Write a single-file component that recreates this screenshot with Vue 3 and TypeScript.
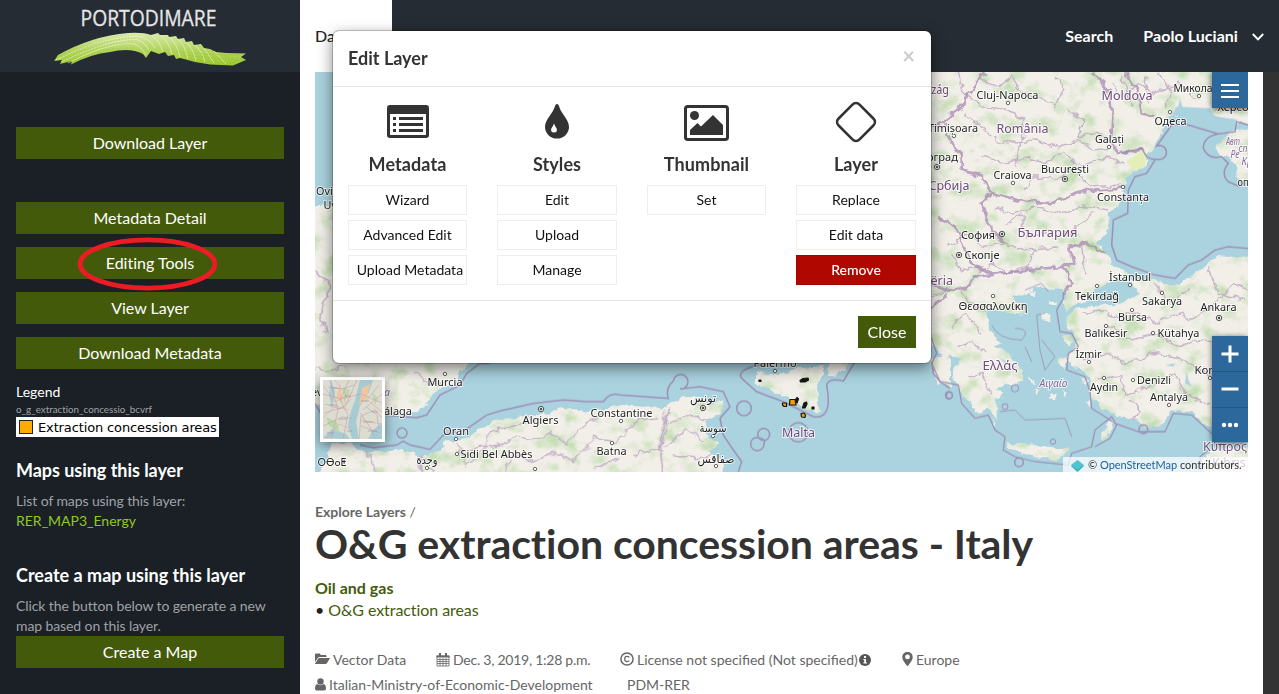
<script setup lang="ts">
interface MapLabel {
  t: string
  x: number
  y: number
  kind?: 'country' | 'sea' | 'small' | 'tifinagh'
  w: number
}

const labels: MapLabel[] = [
  { t: 'Cluj-Napoca', x: 1007.5, y: 99, w: 62 },
  { t: 'Moldova', x: 1127, y: 100, kind: 'country', w: 51 },
  { t: 'Микола', x: 1193, y: 92, w: 39 },
  { t: 'Херсо', x: 1233, y: 111, w: 31 },
  { t: 'Одеса', x: 1170.5, y: 125, w: 32 },
  { t: 'România', x: 1022.5, y: 133, kind: 'country', w: 52 },
  { t: 'Timișoara', x: 953, y: 132, w: 50 },
  { t: 'Galați', x: 1109.5, y: 143, w: 29 },
  { t: 'București', x: 1065, y: 173, w: 48 },
  { t: 'Craiova', x: 1012.5, y: 179, w: 38 },
  { t: 'Београд', x: 936, y: 161, w: 44 },
  { t: 'Србија', x: 949, y: 190, kind: 'country', w: 41 },
  { t: 'ország', x: 932, y: 94, kind: 'country', w: 34 },
  { t: 'Constanța', x: 1123, y: 201, w: 52 },
  { t: 'Авт', x: 1233, y: 145, kind: 'sea', w: 14 },
  { t: 'сп', x: 1243, y: 152, kind: 'sea', w: 9 },
  { t: 'Ре', x: 1235, y: 158, kind: 'sea', w: 9 },
  { t: 'Кр', x: 1247, y: 165, kind: 'sea', w: 11 },
  { t: 'оп', x: 1243, y: 186, w: 11 },
  { t: 'София', x: 978, y: 239, w: 34 },
  { t: 'България', x: 1047.5, y: 237, kind: 'country', w: 60 },
  { t: 'Скопје', x: 982, y: 259, w: 35 },
  { t: 'İstanbul', x: 1130, y: 281, w: 42 },
  { t: 'Tekirdağ', x: 1097, y: 300, w: 44 },
  { t: 'Sakarya', x: 1162, y: 305, w: 40 },
  { t: 'Ankara', x: 1218.5, y: 311, w: 36 },
  { t: 'Bursa', x: 1132.5, y: 321, w: 29 },
  { t: 'Balıkesir', x: 1106, y: 337, w: 43 },
  { t: 'Kütahya', x: 1178.5, y: 337, w: 42 },
  { t: 'İzmir', x: 1088.5, y: 358, w: 26 },
  { t: 'Θεσσαλονίκη', x: 993, y: 310, w: 69 },
  { t: 'Shqipëria', x: 925, y: 285, kind: 'country', w: 56 },
  { t: 'Ελλάς', x: 1000, y: 370, kind: 'country', w: 35 },
  { t: 'Αιγαίο', x: 1053.5, y: 387, kind: 'sea', w: 28 },
  { t: 'Aydın', x: 1104, y: 391, w: 28 },
  { t: 'Denizli', x: 1154, y: 384, w: 34 },
  { t: 'Antalya', x: 1169, y: 401, w: 38 },
  { t: 'Konya', x: 1211, y: 374, w: 33 },
  { t: 'Κύπρος', x: 1225, y: 451, kind: 'country', w: 44 },
  { t: 'Kıbrıs', x: 1229, y: 467, kind: 'country', w: 34 },
  { t: 'Oviedo', x: 334, y: 195, w: 36 },
  { t: 'Uvieu', x: 338, y: 209, w: 29 },
  { t: 'Murcia', x: 445, y: 386, w: 35 },
  { t: 'Sevilla', x: 321, y: 396, w: 32 },
  { t: 'a', x: 387, y: 396, kind: 'sea', w: 6 },
  { t: 'Málaga', x: 393, y: 415, w: 38 },
  { t: 'Oran', x: 456, y: 435, w: 26 },
  { t: 'Algiers', x: 540.5, y: 424, w: 36 },
  { t: 'Sidi Bel Abbès', x: 496.5, y: 458, w: 72 },
  { t: 'وجدة', x: 427, y: 464, w: 21 },
  { t: 'ⵔⴱⴰⵟ', x: 332, y: 466, kind: 'tifinagh', w: 29 },
  { t: 'Constantine', x: 621.5, y: 417, w: 62 },
  { t: 'Batna', x: 611.5, y: 455, w: 30 },
  { t: 'Palermo', x: 775, y: 367, w: 43 },
  { t: 'تونس', x: 703, y: 402, w: 26 },
  { t: 'سوسة', x: 713, y: 432, w: 27 },
  { t: 'صفاقس', x: 716, y: 463, w: 37 },
  { t: 'Malta', x: 798.5, y: 437, kind: 'country', w: 33 },
]

const towns: [number, number][] = [
  [1008, 103], [1199, 96], [1170, 112], [954, 136], [1109, 147], [1013, 183], [1123, 187],
  [993, 296], [1097, 286], [1130, 285], [1162, 293], [1132, 310], [1106, 326], [1153, 333],
  [1089, 362], [1104, 378], [1133, 380], [1169, 405], [1210, 378], [445, 374], [456, 439],
  [457, 454], [427, 468], [621, 421], [612, 443], [535, 469], [775, 371], [713, 436], [716, 466],
]
const capitals: [number, number][] = [
  [937, 167], [1065, 179], [1002, 234], [959, 255], [1219, 318], [541, 409], [703, 408],
]
const sideButtons = ['Metadata Detail', 'Editing Tools', 'View Layer', 'Download Metadata']

interface Column { icon: string; title: string; actions: string[] }
const columns: Column[] = [
  { icon: 'list', title: 'Metadata', actions: ['Wizard', 'Advanced Edit', 'Upload Metadata'] },
  { icon: 'drop', title: 'Styles', actions: ['Edit', 'Upload', 'Manage'] },
  { icon: 'image', title: 'Thumbnail', actions: ['Set'] },
  { icon: 'diamond', title: 'Layer', actions: ['Replace', 'Edit data', 'Remove'] },
]
</script>

<template>
  <div class="page">
    <aside class="sidebar">
      <div class="brand">
        <svg width="300" height="72" viewBox="0 0 300 72">
          <defs>
            <linearGradient id="leaf" x1="0" y1="1" x2="0" y2="0">
              <stop offset="0" stop-color="#9cc92e" />
              <stop offset=".5" stop-color="#b4d560" />
              <stop offset="1" stop-color="#dcebaf" />
            </linearGradient>
          </defs>
          <text x="80.5" y="26" textLength="136" lengthAdjust="spacingAndGlyphs" class="brand-name">PORTODIMARE</text>
          <path d="M54 61L58 55Q92 36 128 33Q143 32 151 35L158 33L160 35L168 35L169 37L176 36L178 39L184 38L186 42L192 41L194 45L201 44L204 48L210 49L216 52L226 53L246 53.500L241 57L246 60L233 65.500L210 64.500L195 62L180 58L176 59L174 55L168 56L165 52L159 54L151 51L146 58L143 54Q130 47 110 52Q91 54 71 64.500L72 61L60 64L62 60Z" fill="url(#leaf)" />
          <g fill="none" stroke="#eef5d2" stroke-width=".8" opacity=".8">
            <path d="M56 60Q98 38 137 36Q149 37 155 48M61 62Q100 43 132 39Q143 39 149 50M68 63Q103 45 128 43Q140 43 146 55" />
            <path d="M151 35Q160 41 163 52M160 35Q169 42 172 54M169 37Q177 43 180 57M178 39Q185 45 188 59M186 42Q193 48 196 61M194 45Q202 50 205 62M204 48L214 63M214 51L226 64" />
          </g>
          <g fill="none" stroke="#80aa23" stroke-width="1.200" stroke-dasharray="1 2" opacity=".35">
            <path d="M65 60Q101 42 133 43M72 62Q105 47 134 48M62 57Q97 39 137 38M177 51Q204 55 241 55M184 55Q210 58 241 60M185 58Q211 63 235 63" />
          </g>
        </svg>
      </div>
      <div class="side-body">
        <button class="btn side-btn">Download Layer</button>
        <div class="tools">
          <button v-for="b in sideButtons" :key="b" class="btn side-btn">
            {{ b }}
            <svg v-if="b === 'Editing Tools'" class="ring" width="140" height="54" viewBox="0 0 140 54">
              <ellipse cx="70.500" cy="27" rx="67.300" ry="24.200" fill="none" stroke="#ed1c24" stroke-width="4.800" />
            </svg>
          </button>
        </div>
        <div class="legend-title">Legend</div>
        <div class="legend-name">o_g_extraction_concessio_bcvrf</div>
        <div class="legend-box"><i></i><span>Extraction concession areas</span></div>
        <h4>Maps using this layer</h4>
        <p>List of maps using this layer:<br /><a>RER_MAP3_Energy</a></p>
        <h4 class="second">Create a map using this layer</h4>
        <p>Click the button below to generate a new map based on this layer.</p>
        <button class="btn side-btn">Create a Map</button>
      </div>
    </aside>

    <main class="main">
      <header class="topbar">
        <div class="tab">Data</div>
        <nav class="nav">
          <span>Search</span>
          <span>Paolo Luciani</span>
          <svg width="12" height="8" viewBox="0 0 12 8"><path d="M.8 1L6 6.300L11.200 1" fill="none" stroke="#fff" stroke-width="1.900" /></svg>
        </nav>
      </header>
      <div class="below">
        <div class="content">
          <div class="map">
            <svg class="tiles" width="933" height="400" viewBox="315 72 933 400">
              <defs>
                <filter id="terrain" filterUnits="userSpaceOnUse" x="300" y="60" width="960" height="420" color-interpolation-filters="sRGB">
                  <feTurbulence type="fractalNoise" baseFrequency=".11" numOctaves="3" seed="8" result="rough" />
                  <feDisplacementMap in="SourceGraphic" in2="rough" scale="8" xChannelSelector="R" yChannelSelector="G" result="land" />
                  <feTurbulence type="fractalNoise" baseFrequency=".05 .06" numOctaves="6" seed="21" />
                  <feColorMatrix values="0 0 0 0 .77  0 0 0 0 .87  0 0 0 0 .71  0 3 0 0 -1.450" result="woods" />
                  <feComposite in="woods" in2="land" operator="in" result="green" />
                  <feMerge><feMergeNode in="land" /><feMergeNode in="green" /></feMerge>
                </filter>
                <filter id="wobble" filterUnits="userSpaceOnUse" x="300" y="60" width="960" height="420">
                  <feTurbulence type="fractalNoise" baseFrequency=".13" numOctaves="2" seed="3" result="n" />
                  <feDisplacementMap in="SourceGraphic" in2="n" scale="8" xChannelSelector="R" yChannelSelector="G" />
                </filter>
                <clipPath id="shore"><use href="#coast-east" /><use href="#coast-west" /></clipPath>
              </defs>
              <rect x="315" y="72" width="933" height="400" fill="#aad3df" />
              <g filter="url(#terrain)" fill="#f2efe9">
                <path id="coast-east" transform="translate(925 0) scale(.33333)" d="M-20 190H999V368L935 370L870 350L800 345L740 345L710 400L690 440L665 470L662 495L620 518L602 545L592 600L555 640L545 705L515 728L550 765L560 795L615 822L540 855L515 868L490 897L440 920L425 935L413 870L330 860L300 885L260 890L300 925L290 945L240 935L180 925L190 990L230 1030L205 1040L250 1060L285 1100L295 1145L255 1150L215 1165L240 1185L215 1200L215 1255L190 1225L175 1240L150 1240L140 1205L110 1185L80 1120L110 1080L50 1065L20 1030L-20 970Z
                  M615 840L680 835L740 858L780 845L830 800L880 765L940 772L999 765V1290L860 1285L800 1240L740 1230L720 1275L650 1280L630 1260L575 1250L530 1225L490 1185L500 1145L470 1110L430 1085L440 1050L460 1015L425 985L425 945L470 920L560 915L645 885Z
                  M999 385L920 395L870 440L885 467L920 470L940 535L999 565ZM245 1330L330 1335L435 1350L400 1378L330 1372L250 1345ZM530 1315L558 1260L572 1265L542 1317ZM830 1370L880 1350L999 1340V1430H850ZM350 940H378L372 962L350 958ZM370 905H395V915H370ZM412 1005L450 1015L440 1035L412 1025ZM405 1070L428 1070L415 1112L400 1090ZM315 872H330V888H315ZM470 1135L490 1145L475 1153ZM310 1135L330 1140L325 1155ZM330 1165L345 1170L340 1185ZM375 1180L395 1182L390 1202L375 1198ZM410 1170L432 1178L425 1190ZM200 1250L212 1270L205 1282ZM480 1205L496 1205L495 1225Z" />
                <path id="coast-west" transform="translate(300 355) scale(.33333)" d="M0 -450H470V20L515 18L475 60L465 85L425 102L390 130L368 165L300 180L250 180L150 165L100 130L45 150L0 80Z
                  M50 390L95 265L150 265L180 285L210 290L310 282L360 305L400 297L440 260L500 248L560 210L620 190L700 185L790 158L870 170L960 150L1100 160L1140 128L1200 122L1230 150L1270 135L1262 175L1220 200L1215 240L1260 260L1230 290L1270 330L1265 390Z
                  M1365 72L1365 48L1430 60L1500 40L1575 33L1550 100L1558 170L1520 165L1460 125L1410 105L1368 90ZM1580 62L1600 0L1650 0L1635 40L1610 65ZM1890 20L1915 0L1950 0V95L1915 85Z" />
              </g>
              <g transform="translate(925 0) scale(.33333)" fill="#aad3df">
                <path d="M490 896L515 868L550 852L610 857L640 878L610 886L595 907L545 906ZM740 345L755 320L855 325L870 349L935 358L930 377L860 372ZM785 1110L790 1140L800 1160L780 1150ZM755 340L765 295L775 330ZM720 1095L750 1090L745 1100ZM220 1070L285 1110L240 1090ZM110 1094L190 1107L150 1100ZM195 930L245 960L285 950L240 940Z" />
                <path d="M605 485L660 445L662 495L630 515Z" fill="#e3efb7" />
                <path d="M500 725L550 765L490 745Z" fill="#b5d7a2" />
              </g>
              <g clip-path="url(#shore)">
                <g filter="url(#wobble)" fill="none" stroke="#b89fbd">
                  <g transform="translate(925 0) scale(.33333)">
                    <g stroke-width="4.500" opacity=".7">
                      <path d="M100 216L115 280L170 320L230 330L290 350L300 400L280 430L270 500M160 240L220 260L260 230L290 280L340 290L390 320L420 260L390 230M115 340L180 390L230 430L330 420L400 440L460 420L500 450L560 445M170 470L240 490L300 470L360 490L410 460L470 500L540 470L600 490M300 570L330 530L400 540L440 500L500 560L590 555M430 330L480 360L460 410L520 400L570 430M560 250L590 290L640 250L690 280L760 250L820 300M590 230L620 320M660 230L670 310M700 220L740 270L720 320M210 620L260 640L330 620L400 640L480 620L550 630M240 680L290 640L300 710L370 690L440 700L500 640M70 740L130 700L170 740L230 730L300 750L400 740" />
                      <path d="M80 760L110 810L160 800M150 830L200 790L250 820L310 800L330 740M20 890L100 860L140 920L180 930M80 980L120 940L170 1000M90 1040L140 1030L190 1060M130 1130L170 1120L200 1180M470 940L520 930L570 950L640 940L690 970L770 940L800 960L880 900L930 850L969 870M500 1000L560 980L620 1020L690 1000L760 1040L820 1020L920 1040L969 1010M470 1080L550 1060L600 1090L690 1060L780 1080L860 1130M520 1140L590 1130L600 1190L690 1150L750 1120L780 1180L850 1210M610 1200L650 1230L620 1265M690 850L730 910L790 870M850 800L880 880L960 900M470 740L480 820" />
                    </g>
                    <g stroke-width="8" stroke="#a888b3" opacity=".75">
                      <path d="M180 216L130 280L100 330L60 360L20 380M60 370L80 430L110 460L110 510L170 530L200 580L280 600L380 610L460 575L600 565M200 580L170 610L200 690L240 730M500 216L550 270L560 330L555 420L580 460L650 450M600 216L640 280L650 340L690 350M40 650L90 680L140 790L200 825L300 810L420 800L450 790L430 740L480 730L540 760M0 840L60 870L130 860L150 830L200 825M10 930L70 880M420 800L440 850L410 890" />
                    </g>
                  </g>
                  <g transform="translate(300 355) scale(.33333)">
                    <path stroke-width="4" opacity=".75" d="M45 40L90 50L140 30M340 45L390 90L440 80M200 290L230 350M360 300L400 351M470 260L500 330L550 290L570 230L650 210L720 190M510 280L600 270L650 240L700 260L750 230L800 270L850 210L920 170M610 351L640 300L700 320L770 290L820 320L880 250L950 260L1000 200L1080 190M1000 300L1080 280L1100 220L1090 170M1100 210L1170 180L1240 200M1090 280L1160 220L1210 260M1120 300L1200 310L1240 300M880 340L960 310" />
                    <path stroke-width="7" opacity=".75" d="M360 285L365 351M1110 160L1090 210L1080 270L1090 351M45 -250L90 -210L60 -120L80 -60" />
                  </g>
                </g>
              </g>
              <g fill="none" stroke="#9c84ae" stroke-width="1.200" opacity=".85">
                <g transform="translate(925 0) scale(.33333)" stroke-width="4.500">
                  <path d="M590 460L650 445L665 470Q680 480 700 478A21 21 0 1 0 695 438L740 375L790 375L880 402L930 395L935 365L969 375M880 402Q835 410 835 445Q850 480 890 470L910 490Q885 520 910 545L945 560M690 480L665 520L630 530L610 570L608 640L565 660L560 735L575 780L620 800L690 825L750 835L790 795L830 780L870 750L910 740L969 745" />
                  <path d="M415 875V895L395 930L405 995L440 1000L460 1040L430 1060L425 1110L480 1130L495 1175L500 1225L540 1250L570 1270L640 1295L720 1295L745 1240L800 1245L860 1300M20 1015L35 1060L20 1090L45 1145L100 1155L110 1210L150 1255L190 1245L210 1290L240 1310L235 1350L270 1370L330 1385L430 1395L440 1360L500 1340L510 1290L560 1250L575 1275L555 1315L510 1340M830 1411L825 1370L850 1350" stroke-width="3.800" />
                  <path d="M200 975Q220 1020 290 1020Q320 985 270 985M360 940L335 945L345 1050L360 1110L390 1070L350 1020M300 1040L320 1085M300 870L350 850L370 875M225 1235L270 1230L300 1260L420 1255L440 1310" stroke-width="2.500" />
                  <circle cx="72" cy="1186" r="10" /><circle cx="282" cy="1387" r="13" /><circle cx="655" cy="1288" r="13" /><circle cx="240" cy="1220" r="9" stroke-width="3" /><circle cx="270" cy="1165" r="11" stroke-width="3" /><circle cx="384" cy="1325" r="8" stroke-width="3" />
                </g>
                <g transform="translate(300 355) scale(.33333)" stroke-width="4.500">
                  <path d="M570 25L540 25L500 55L480 90L420 120L380 180L350 188L250 180M180 270L220 278L290 270L310 258L330 270L390 283L430 240L500 222L560 180L600 168L700 145L790 135L860 140L910 140Q930 110 960 120L1105 130Q1095 100 1120 78A22 22 0 1 1 1140 102L1200 95L1270 110L1290 155L1260 190L1270 240L1290 270L1325 320L1315 351M45 145L70 190M1540 185Q1600 195 1580 90Q1585 68 1630 78L1665 20M1390 25Q1305 45 1325 70L1370 110L1450 140L1540 185M1895 20L1900 55L1920 80L1950 100" />
                  <circle cx="306" cy="234" r="15" /><circle cx="1332" cy="160" r="22" /><circle cx="1391" cy="238" r="18" /><path d="M1392 268A20 20 0 1 1 1365 248Q1400 247 1392 268Z" /><circle cx="1495" cy="232" r="29" /><path d="M1950 110A11 11 0 1 0 1950 132" />
                </g>
              </g>
              <g fill="#161616" stroke="#161616" stroke-width="1.200" stroke-linejoin="round">
                <path d="M800 380.500L803 378.500L808 378L808.500 380L805 382L800.500 382ZM759 380H761V381.500H759ZM804 403L806.500 402L807 404L805 408L802.500 408ZM812 407H814V409H812ZM795 400L797 397.500L798.500 399L797 403Z" />
                <path d="M790 399.500L795 399.500L796 405L789.500 405ZM782.500 403H786.500V406.500H784L782.500 405ZM801 413.500L804 413L805.500 415L805 417.500L801.500 417Z" fill="#ff9d00" />
              </g>
              <g fill="#fff" stroke="#555" stroke-width=".9">
                <circle v-for="(p, i) in towns" :key="i" :cx="p[0]" :cy="p[1]" r="1.700" />
              </g>
              <g v-for="(p, i) in capitals" :key="'c' + i" stroke="#444" stroke-width=".9" fill="#fff">
                <circle :cx="p[0]" :cy="p[1]" r="2.700" /><circle :cx="p[0]" :cy="p[1]" r="1" fill="#444" />
              </g>
              <text
                v-for="l in labels"
                :key="l.t"
                :x="l.x - l.w / 2"
                :y="l.y"
                :textLength="l.w"
                lengthAdjust="spacingAndGlyphs"
                :class="['place', l.kind]"
              >{{ l.t }}</text>
            </svg>
            <div class="overview">
              <svg width="59" height="59" viewBox="0 0 59 59">
                <rect width="59" height="59" fill="#dcddd0" />
                <path d="M37 0L32 20L28 31L25 45L29 59H36L33 42L37 26L46 12L50 0ZM0 58L9 49L23 54L27 59ZM45 59L50 50L59 43V59ZM8 0L6 15L9 29L12 12Z" fill="#a6cbd3" />
                <path d="M39 8L47 4L44 18L36 25ZM17 3L13 18L20 23Z" fill="#eec6a1" />
                <path d="M3 37L14 42L17 53L6 46ZM20 7L27 10L21 24ZM49 12L55 18L52 25Z" fill="#bcd7ab" />
                <path d="M0 14L18 19L38 14L59 23M7 0L15 30L8 59M26 0L17 20L25 35L20 59M34 0L22 27L1 33M0 46L19 37L29 38M36 59L38 36L52 30L59 38M38 46L57 53M42 22L56 5M37 33L47 47L52 59M2 24L17 29L28 19M5 7L19 9L31 5M43 27L54 35L56 49" fill="none" stroke="#bd96a9" stroke-width=".7" opacity=".7" />
                <path d="M0 5L12 22L30 12M0 38L12 26L26 30M40 30L59 14M38 40L59 44M12 0L24 16M47 22L59 32M4 59L16 44L26 48" fill="none" stroke="#e0a9a0" stroke-width=".8" opacity=".8" />
                <path d="M10 8h5M22 16h6M6 25h8M38 21h8M49 32h6M40 42h10M16 39h8M24 51h5M4 53h7M45 51h9" stroke="#957e98" stroke-width=".8" opacity=".65" />
              </svg>
            </div>
            <button class="map-btn menu"><svg width="18" height="14" viewBox="0 0 18 14"><path d="M0 1H18M0 7H18M0 13H18" stroke="#fff" stroke-width="2" /></svg></button>
            <div class="zoom">
              <button class="map-btn"><svg width="18" height="18" viewBox="0 0 18 18"><path d="M.5 9H17.500M9 .5V17.500" stroke="#fff" stroke-width="3" /></svg></button>
              <button class="map-btn"><svg width="18" height="18" viewBox="0 0 18 18"><path d="M.5 9H17.500" stroke="#fff" stroke-width="3" /></svg></button>
              <button class="map-btn"><svg width="18" height="18" viewBox="0 0 18 18" fill="#fff"><circle cx="3" cy="9" r="2.200" /><circle cx="9" cy="9" r="2.200" /><circle cx="15" cy="9" r="2.200" /></svg></button>
            </div>
            <div class="credit">
              <svg width="13" height="12" viewBox="0 0 13 12"><path d="M0 6L6.500 1L13 6L6.500 12Z" fill="#3caaba" /><path d="M0 5L6.500 0L13 5L6.500 10Z" fill="#50c5d0" /></svg>
              <span>© <a>OpenStreetMap</a> contributors.</span>
            </div>
          </div>
          <div class="crumb"><b>Explore Layers</b> /</div>
          <h1>O&amp;G extraction concession areas - Italy</h1>
          <div class="cat">Oil and gas</div>
          <div class="sub"><i>•</i> O&amp;G extraction areas</div>
          <div class="meta first">
            <span class="m1"><svg width="15" height="12" viewBox="0 0 15 12" fill="#666"><path d="M0 9V1.500Q0 .5 1 .5H4.500Q5.500 .5 5.500 1.500V2H10.500Q11.500 2 11.500 3V4H4.500Q3.500 4 2.800 5ZM4 5H14.500Q15 5 14.700 5.700L12 10Q11.500 11 10.500 11H.5Q-.2 11 .3 10.200L3 6Q3.500 5 4 5Z" /></svg>Vector Data</span>
            <span class="m2"><svg width="14" height="14" viewBox="0 0 14 14"><path d="M1 3H13V13H1ZM1 6.500H13M1 8.500H13M1 10.500H13M4 5V13M7 5V13M10 5V13" fill="none" stroke="#666" stroke-width=".8" /><path d="M.5 2.500H13.500V4.500H.5ZM3 0H5V4H3ZM9 0H11V4H9Z" fill="#666" /></svg>Dec. 3, 2019, 1:28 p.m.</span>
            <span class="m3"><svg width="14" height="14" viewBox="0 0 14 14" fill="none" stroke="#666"><circle cx="7" cy="7" r="6.100" stroke-width="1.500" /><path d="M9.300 5.500Q8.600 4.400 7 4.400Q4.700 4.400 4.700 7Q4.700 9.600 7 9.600Q8.600 9.600 9.300 8.500" stroke-width="1.200" /></svg>License not specified (Not specified)<svg class="info" width="12" height="12" viewBox="0 0 12 12"><circle cx="6" cy="6" r="6" fill="#555" /><path d="M5 2H7V4H5ZM4.300 5H7V8.500H8V9.500H4.300V8.500H5.200V6H4.300Z" fill="#fff" /></svg></span>
            <span class="m4"><svg width="11" height="14" viewBox="0 0 11 14"><path fill-rule="evenodd" d="M5.500 0C2.500 0 .3 2 .3 5C.3 7 1 8 1.700 9.200L4.500 13.300Q5.500 14.500 6.500 13.300L9.300 9.200C10 8 10.700 7 10.700 5C10.700 2 8.500 0 5.500 0ZM5.500 2.500A2.400 2.400 0 1 1 5.500 7.300A2.400 2.400 0 1 1 5.500 2.500Z" fill="#666" /></svg>Europe</span>
          </div>
          <div class="meta">
            <span class="m5"><svg width="11" height="13" viewBox="0 0 11 13" fill="#666"><circle cx="5.500" cy="3.500" r="3.200" /><path d="M2.500 6Q5.500 8.500 8.500 6Q11 6.500 11 10.500Q11 12.500 9.200 12.500H1.800Q0 12.500 0 10.500Q0 6.500 2.500 6Z" /></svg>Italian-Ministry-of-Economic-Development</span>
            <span>PDM-RER</span>
          </div>
        </div>
        <div class="gutter"></div>
      </div>
    </main>

    <section class="modal">
      <header class="modal-head"><h2>Edit Layer</h2><span class="x">×</span></header>
      <div class="modal-body">
        <div v-for="c in columns" :key="c.title" class="col">
          <div class="glyph">
            <svg v-if="c.icon === 'list'" width="42" height="34" viewBox="0 0 42 34"><path fill-rule="evenodd" d="M3 0H39Q42 0 42 3V30Q42 33 39 33H3Q0 33 0 30V3Q0 0 3 0ZM3 9V29.500Q3 30 3.500 30H38.500Q39 30 39 29.500V9ZM6 12H9V15H6ZM12 12H36V15H12ZM6 18H9V21H6ZM12 18H36V21H12ZM6 24H9V27H6ZM12 24H36V27H12Z" fill="#333" /></svg>
            <svg v-else-if="c.icon === 'drop'" class="drop" width="24" height="35" viewBox="0 0 24 35"><path d="M12 0Q13.500 0 14 2C16 10 24 15 24 23A12 11.500 0 0 1 0 23C0 15 8 10 10 2Q10.500 0 12 0Z" fill="#333" /><path d="M9 19.500Q10 22.500 11.700 24.500Q12.700 28.500 9 28.500Q5.300 28.500 6.300 24.500Q8 22.500 9 19.500Z" fill="#fff" /></svg>
            <svg v-else-if="c.icon === 'image'" width="45" height="36" viewBox="0 0 45 36"><rect x="1.500" y="1.500" width="42" height="33" rx="2.300" fill="none" stroke="#333" stroke-width="3" /><circle cx="10.500" cy="10.500" r="4.500" fill="#333" /><path d="M6 30V25L13.500 18L17 21.500L29 10L39 20V30Z" fill="#333" /></svg>
            <svg v-else class="diamond" width="42" height="42" viewBox="0 0 42 42"><rect x="6.200" y="6.200" width="29.600" height="29.600" rx="5" transform="rotate(45 21 21)" fill="none" stroke="#333" stroke-width="2.600" /></svg>
          </div>
          <h3>{{ c.title }}</h3>
          <button v-for="a in c.actions" :key="a" class="action" :class="{ danger: a === 'Remove' }">{{ a }}</button>
        </div>
      </div>
      <footer class="modal-foot"><button class="btn close">Close</button></footer>
    </section>
  </div>
</template>

<style>
body { overflow: hidden; }
</style>

<style scoped>
* { box-sizing: border-box; }
.page { position: relative; display: flex; width: 1279px; height: 694px; overflow: hidden; background: #fff; color: #333; font: 14px/20px Lato, "Liberation Sans", sans-serif; font-variant-ligatures: no-common-ligatures; }
svg { display: block; }
button { border: 0; font-family: inherit; padding: 0; font-variant-ligatures: inherit; }
.btn { height: 32px; background: #445a0b; color: #fff; font-size: 16px; line-height: 32px; }
.sidebar { width: 300px; background: #1a2026; color: #fff; }
.brand { height: 72px; background: #262c33; }
.brand-name { font: 500 21px "Open Sans", sans-serif; fill: #e4e5e7; stroke: #e4e5e7; stroke-width: .3px; }
.side-body { padding: 55px 16px 0; }
.side-btn { position: relative; display: block; width: 268px; }
.tools { display: grid; gap: 13px; margin-top: 43px; }
.ring { position: absolute; left: 61px; top: -10px; }
.legend-title { margin-top: 13px; }
.legend-name { font-size: 9.800px; line-height: 15px; color: #a0a3a6; }
.legend-box { display: flex; align-items: center; width: 203px; height: 20px; background: #fff; color: #000; font: 13px "DejaVu Sans", sans-serif; white-space: nowrap; }
.legend-box i { flex: none; width: 14px; height: 14px; margin: 0 5px 0 3px; border: 1px solid #222; background: #ffab00; }
.legend-box span { letter-spacing: -.13px; }
h4 { margin: 23px 0 11px; font-size: 18px; line-height: 20px; font-weight: 700; letter-spacing: -.04px; }
h4.second { margin-top: 34px; letter-spacing: 0; }
p { margin: 0; color: #9fa2a5; letter-spacing: -.1px; }
p a { color: #92c91b; letter-spacing: 0; }
.main { flex: 1; display: flex; flex-direction: column; }
.topbar { display: flex; height: 72px; background: #262c33; }
.tab { width: 92px; padding: 26px 15px; background: #fff; font-size: 16px; color: #222; font-weight: 500; }
.nav { display: flex; align-items: center; margin-left: auto; padding-right: 15px; color: #fff; font-size: 16px; font-weight: 700; letter-spacing: .05px; }
.nav span + span { margin-left: 30px; }
.nav svg { margin: 2px 0 0 14px; }
.below { flex: 1; display: flex; min-height: 0; }
.content { flex: 1; padding-left: 15px; min-width: 0; }
.gutter { width: 16px; background: #333; }
.map { position: relative; width: 933px; height: 400px; overflow: hidden; }
.place { font: 11.500px "Noto Sans", "DejaVu Sans", sans-serif; fill: #222; stroke: #fff; stroke-opacity: .75; stroke-width: 2px; paint-order: stroke; }
.country { font-size: 12.500px; fill: #704b79; }
.sea { font-size: 11px; font-style: italic; fill: #85699b; }
.tifinagh { font-family: "DejaVu Sans", sans-serif; }
.overview { position: absolute; left: 5px; top: 305px; width: 65px; height: 65px; padding: 3px; background: #fff; box-shadow: 0 3px 12px rgba(0, 0, 0, .5); }
.map-btn { display: grid; place-items: center; width: 36px; height: 36px; background: #2c689c; }
.menu { position: absolute; right: 0; top: 0; box-shadow: 0 1px 6px rgba(0, 0, 0, .65); }
.menu svg { margin-top: 1px; }
.zoom { position: absolute; right: 0; top: 264px; box-shadow: 0 1px 6px rgba(0, 0, 0, .6); }
.zoom .map-btn { height: 35px; padding-top: 1px; }
.zoom .map-btn + .map-btn { height: 35.500px; border-top: 1px solid #235985; padding-top: 0; }
.credit { position: absolute; right: 0; bottom: 0; display: flex; align-items: center; width: 185px; height: 15px; padding-left: 8px; background: rgba(255, 255, 255, .72); font: 11px/15px Lato, sans-serif; white-space: nowrap; }
.credit svg { margin: 2px 4px 0 0; }
.credit span { margin-top: 0; letter-spacing: -.01px; }
.credit a { color: #1b609d; }
.crumb { margin-top: 30px; color: #666; }
.crumb b { font-weight: 700; }
h1 { margin: -1px 0 0; font-size: 41px; line-height: 46px; font-weight: 700; letter-spacing: -.05px; white-space: nowrap; }
.cat { margin-top: 10px; font-size: 16px; line-height: 22px; font-weight: 700; color: #445a0b; }
.sub { font-size: 16px; line-height: 22px; color: #445a0b; letter-spacing: -.07px; }
.sub i { color: #222; font-style: normal; }
.meta { display: flex; height: 25px; color: #666; line-height: 20px; white-space: nowrap; }
.meta.first { margin-top: 29px; }
.meta span { display: flex; }
.meta svg { flex: none; margin: 3px 3px 0 0; }
.m1 { width: 121px; }
.m2 { width: 184px; letter-spacing: -.25px; }
.m3 { width: 282px; font-variant-ligatures: normal; }
.meta .m3 > svg:first-child, .meta .m4 > svg { margin-top: 2px; }
.meta .info { margin: 4px 0 0 1px; }
.m5 { width: 312px; }
.modal { position: absolute; left: 333px; top: 31px; width: 598px; height: 332px; border-radius: 6px; background: #fff; box-shadow: 0 5px 15px rgba(0, 0, 0, .5), 0 0 0 1px rgba(0, 0, 0, .2); }
.modal-head { display: flex; justify-content: space-between; height: 56px; padding: 15px 16px 0 15px; border-bottom: 1px solid #e5e5e5; }
h2 { margin: 2px 0 0; font-size: 18px; line-height: 20px; font-weight: 700; letter-spacing: 0; }
.x { color: #ccc; font-size: 22px; line-height: 20px; font-weight: 700; }
.modal-body { display: flex; height: 214px; padding: 15px 0 15px 14.750px; border-bottom: 1px solid #e5e5e5; gap: 30px; }
.col { flex: none; width: 119.500px; text-align: center; }
.glyph { display: flex; justify-content: center; height: 52px; padding-top: 3px; }
.glyph .drop { margin-top: -1px; }
.glyph .diamond { margin-top: -4px; }
h3 { margin: 0 0 11px; font-size: 18px; line-height: 20px; font-weight: 700; letter-spacing: .08px; }
.action { display: block; width: 100%; height: 30px; margin-bottom: 5px; padding: 0 8px; border: 1px solid #eee; background: #fff; font-size: 14px; line-height: 28px; color: #111; white-space: nowrap; }
.action.danger { background: #b00800; border-color: #a00700; color: #fff; font-weight: 500; }
.modal-foot { display: flex; justify-content: flex-end; padding: 15px; }
.close { width: 58px; }
</style>
